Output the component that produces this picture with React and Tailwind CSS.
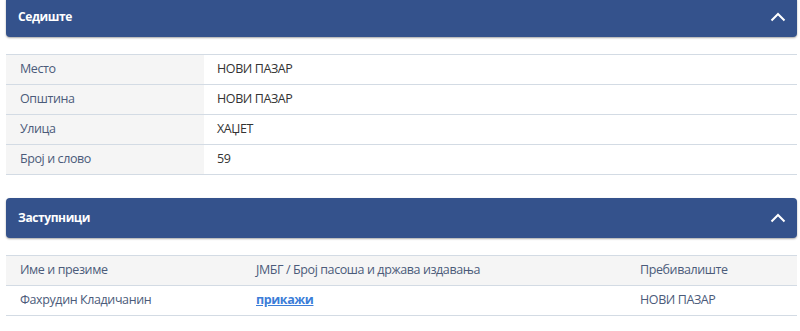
import React from 'react';

const seat = [
  { label: 'Место', value: 'НОВИ ПАЗАР' },
  { label: 'Општина', value: 'НОВИ ПАЗАР' },
  { label: 'Улица', value: 'ХАЏЕТ' },
  { label: 'Број и слово', value: '59' },
];

const reps = [
  { name: 'Фахрудин Кладичанин', residence: 'НОВИ ПАЗАР' },
];

const ChevronUp = () => (
  <svg width="16" height="10" viewBox="0 0 16 10" fill="none">
    <path d="M1.5 8.5 8 2l6.5 6.5" stroke="white" strokeWidth="2" />
  </svg>
);

const PanelHeader = ({ title, className = '' }) => (
  <div className={`flex h-10 items-center justify-between rounded-[4px] bg-[#34528c] pl-[12px] pr-[11px] shadow-[0_1px_2px_rgba(0,0,0,0.35)] ${className}`}>
    <span className="text-[12px] font-bold tracking-[-0.4px] text-white">{title}</span>
    <ChevronUp />
  </div>
);

const App = () => {
  return (
    <div className="flex flex-col px-[6px] pr-[3px] font-['Open_Sans',sans-serif] text-[12.5px] tracking-[-0.4px]">
      <PanelHeader title="Седиште" className="-mt-[3px]" />

      <table className="mt-[17px] w-full border-collapse">
        <tbody>
          {seat.map((row) => (
            <tr key={row.label} className="h-[30px] border-t border-b border-[#d3dbe4]">
              <td className="w-[198px] bg-[#f5f5f5] pl-[14px] text-[#4b5b7a]">{row.label}</td>
              <td className="pl-[13px] text-[#333]">{row.value}</td>
            </tr>
          ))}
        </tbody>
      </table>

      <PanelHeader title="Заступници" className="mt-[23px]" />

      <table className="mt-[17px] w-full border-collapse">
        <thead>
          <tr className="h-[30px] border-t border-b border-[#d3dbe4] bg-[#f5f5f5] text-left">
            <th className="w-[250px] pl-[14px] font-normal text-[#4b5b7a]">Име и презиме</th>
            <th className="w-[384px] font-normal text-[#4b5b7a]">ЈМБГ / Број пасоша и држава издавања</th>
            <th className="font-normal text-[#4b5b7a]">Пребивалиште</th>
          </tr>
        </thead>
        <tbody>
          {reps.map((r) => (
            <tr key={r.name} className="h-[30px] border-b border-[#d3dbe4]">
              <td className="pl-[14px] text-[#4b5b7a]">{r.name}</td>
              <td>
                <a href="#" className="font-bold text-[#3b7dd8] underline">прикажи</a>
              </td>
              <td className="text-[#4b5b7a]">{r.residence}</td>
            </tr>
          ))}
        </tbody>
      </table>
    </div>
  );
};

export default App;
